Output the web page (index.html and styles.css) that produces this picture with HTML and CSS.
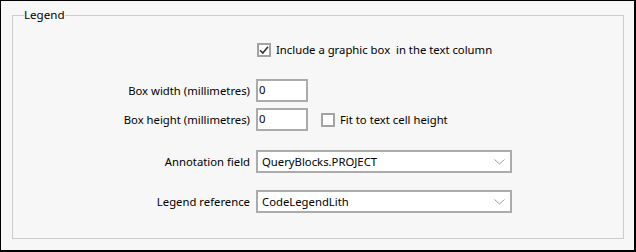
FILE: index.html
```html
<!DOCTYPE html>
<html lang="en">
<head>
    <meta charset="UTF-8">
    <title>Legend</title>
    <link rel="stylesheet" href="styles.css">
</head>
<body>
    <div class="window">
        <fieldset class="group">
            <legend>Legend</legend>
            <div class="form">
                <div class="row row-first">
                    <span class="name"></span>
                    <label class="check check-main">
                        <span class="box">
                            <svg width="10" height="10" viewBox="0 0 10 10"><path d="M1 5.2 L3.8 8 L9 1.8" fill="none" stroke="#333" stroke-width="1.6"/></svg>
                        </span>
                        <span>Include a graphic box&nbsp; in the text column</span>
                    </label>
                </div>
                <div class="row row-width">
                    <label class="name" for="boxWidth">Box width (millimetres)</label>
                    <input class="num" id="boxWidth" type="text" value="0">
                </div>
                <div class="row row-height">
                    <label class="name" for="boxHeight">Box height (millimetres)</label>
                    <input class="num" id="boxHeight" type="text" value="0">
                    <label class="check check-fit">
                        <span class="box"></span>
                        <span>Fit to text cell height</span>
                    </label>
                </div>
                <div class="row row-annotation">
                    <span class="name">Annotation field</span>
                    <div class="combo">
                        <span class="combo-text">QueryBlocks.PROJECT</span>
                        <svg class="chevron" width="11" height="6" viewBox="0 0 11 6"><path d="M0.5 0.5 L5.5 5 L10.5 0.5" fill="none" stroke="#9a9a9a" stroke-width="1"/></svg>
                    </div>
                </div>
                <div class="row row-reference">
                    <span class="name">Legend reference</span>
                    <div class="combo">
                        <span class="combo-text">CodeLegendLith</span>
                        <svg class="chevron" width="11" height="6" viewBox="0 0 11 6"><path d="M0.5 0.5 L5.5 5 L10.5 0.5" fill="none" stroke="#9a9a9a" stroke-width="1"/></svg>
                    </div>
                </div>
            </div>
        </fieldset>
    </div>
</body>
</html>
```

FILE: styles.css
```css
body {
    margin: 0;
    padding: 0;
    font-family: "Noto Sans", "Open Sans", sans-serif;
    font-size: 11.3px;
    color: #000;
    background-color: #f7f7f7;
}
.window {
    width: 636px;
    height: 252px;
    box-sizing: border-box;
    border: 1px solid #000;
    border-right-width: 2px;
    border-bottom-width: 2px;
    padding: 6px 10px 11px 11px;
    display: flex;
    flex-direction: column;
    background-color: #f7f7f7;
}
.group {
    flex: 1;
    margin: 0;
    padding: 0;
    min-width: 0;
    border: 1px solid #cccccc;
}
.group legend {
    margin-left: 11px;
    padding: 0;
    line-height: 16px;
    font-size: 11.6px;
}
.form {
    padding-top: 15px;
}
.row {
    display: flex;
    align-items: center;
    height: 23px;
}
.row-width {
    margin-top: 18px;
}
.row-height {
    margin-top: 6px;
}
.row-annotation {
    margin-top: 19px;
}
.row-reference {
    margin-top: 17px;
}
.name {
    width: 237px;
    margin-right: 6px;
    text-align: right;
    white-space: nowrap;
}
.check {
    display: flex;
    align-items: center;
    gap: 5px;
    white-space: nowrap;
}
.check-main {
    margin-left: 1px;
}
.check-fit {
    margin-left: 13px;
}
.box {
    width: 14px;
    height: 14px;
    box-sizing: border-box;
    border: 2px solid #a3a3a3;
    background-color: #fff;
    display: flex;
    align-items: center;
    justify-content: center;
}
.num {
    width: 52px;
    height: 23px;
    box-sizing: border-box;
    margin: 0;
    padding: 0 0 2px 1px;
    border: 2px solid #ababab;
    background-color: #fff;
    font-family: inherit;
    font-size: 11.3px;
    color: #000;
    outline: none;
}
.combo {
    width: 256px;
    height: 23px;
    box-sizing: border-box;
    border: 2px solid #ababab;
    background-color: #fff;
    display: flex;
    align-items: center;
    justify-content: space-between;
    padding: 0 5px 0 4px;
}
.combo-text {
    white-space: nowrap;
}
.chevron {
    display: block;
    margin-top: 1px;
}
```
